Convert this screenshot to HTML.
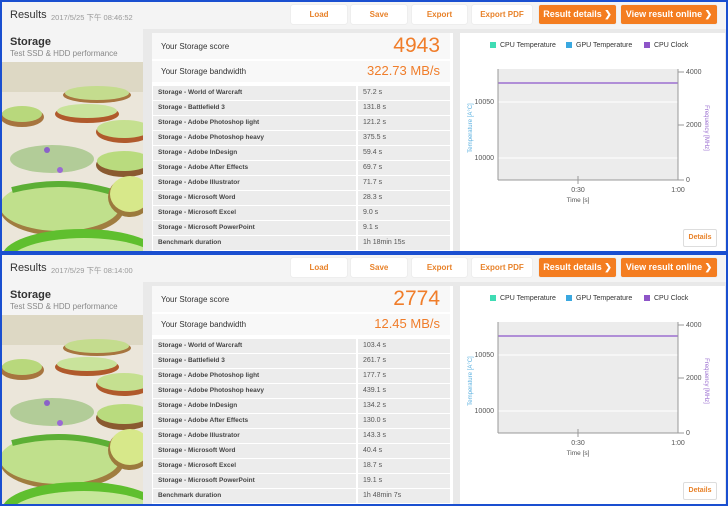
<!DOCTYPE html><html><head><style>
*{margin:0;padding:0;box-sizing:border-box}
body{width:728px;height:506px;background:#1a4fd0;font-family:"Liberation Sans","Noto Sans CJK TC",sans-serif;position:relative;overflow:hidden}
.p{position:absolute;left:2px;width:724px;height:249px;background:#e9e9e9;overflow:hidden}
.hd{position:absolute;left:0;top:0;width:724px;height:27px;background:#f4f4f4}
.hd .t{position:absolute;left:8px;top:7px;font-size:11px;color:#333}
.hd .d{position:absolute;left:49px;top:10px;font-size:7.5px;color:#999}
.b{position:absolute;top:3px;height:19px;background:#fff;color:#e8822a;font-size:8px;font-weight:bold;text-align:center;line-height:19px;border-radius:2px;box-shadow:0 0 1px #ccc}
.o{background:#f47d20;color:#fff;font-size:9px}
.lc{position:absolute;left:0;top:27px;width:141px;height:223px;background:#f4f4f4}
.lc .s{position:absolute;left:8px;top:7px;font-size:11px;font-weight:bold;color:#333}
.lc .ss{position:absolute;left:8px;top:20px;font-size:8px;color:#888}
.mc{position:absolute;left:150px;top:31px;width:301px;height:219px;background:#fff}
.sc{position:absolute;left:0;top:0;width:298px;height:26px;background:#f8f8f8}
.bw{position:absolute;left:0;top:28px;width:298px;height:21px;background:#f8f8f8}
.lab{position:absolute;left:9px;font-size:8px;color:#333}
.val{position:absolute;right:10px;color:#f07d2a}
.row{position:absolute;left:1px;width:297px;height:14px}
.row .a{position:absolute;left:0;top:0;width:203px;height:14px;background:#ececec;font-size:6.5px;font-weight:bold;color:#444;padding-left:5px;line-height:14px}
.row .c{position:absolute;left:205px;top:0;width:92px;height:14px;background:#ececec;font-size:7px;color:#555;padding-left:5px;line-height:14px}
.rc{position:absolute;left:458px;top:31px;width:265px;height:219px;background:#fff}
.lg{position:absolute;top:9px;font-size:7px;color:#333}
.lg i{display:inline-block;width:6px;height:6px;margin-right:4px;vertical-align:-1px}
.det{position:absolute;left:223px;top:196px;width:34px;height:18px;border:1px solid #ddd;border-radius:2px;font-size:7px;font-weight:bold;color:#e8822a;text-align:center;line-height:16px}
</style></head><body>

<div class="p" style="top:2px">
<div class="hd"><div class="t">Results</div><div class="d">2017/5/25 下午 08:46:52</div>
<div class="b" style="left:289px;width:56px">Load</div><div class="b" style="left:349px;width:56px">Save</div><div class="b" style="left:410px;width:55px">Export</div><div class="b" style="left:470px;width:60px">Export PDF</div>
<div class="b o" style="left:537px;width:77px">Result details ❯</div><div class="b o" style="left:619px;width:96px">View result online ❯</div></div>
<div class="lc"><div class="s">Storage</div><div class="ss">Test SSD &amp; HDD performance</div>
<svg style="position:absolute;left:0;top:33px" width="141" height="190"><rect width="141" height="190" fill="#ebe6da"/><rect y="0" width="141" height="30" fill="#ddd8c4"/>
<ellipse cx="95" cy="33" rx="34" ry="8" fill="#a7753f"/><ellipse cx="95" cy="31" rx="32" ry="7" fill="#c4dc8e"/>
<ellipse cx="20" cy="55" rx="22" ry="10" fill="#a7753f"/><ellipse cx="20" cy="52" rx="20" ry="8" fill="#b8d87c"/>
<ellipse cx="85" cy="52" rx="32" ry="9" fill="#b05a2c"/><ellipse cx="85" cy="49" rx="30" ry="7" fill="#c9e39b"/>
<ellipse cx="122" cy="70" rx="28" ry="11" fill="#b05a2c"/><ellipse cx="122" cy="67" rx="27" ry="9" fill="#c5e090"/>
<ellipse cx="50" cy="97" rx="42" ry="14" fill="#8cba6c" opacity=".6"/>
<ellipse cx="122" cy="103" rx="28" ry="12" fill="#8a5a30"/><ellipse cx="122" cy="99" rx="27" ry="10" fill="#b9db7e"/>
<ellipse cx="60" cy="147" rx="62" ry="27" fill="#a07d40"/><ellipse cx="58" cy="144" rx="60" ry="25" fill="#c0e08c"/><path d="M10 128 Q60 115 110 130" stroke="#5caf35" stroke-width="6" fill="none"/>
<ellipse cx="128" cy="135" rx="22" ry="20" fill="#9c7a3d"/><ellipse cx="128" cy="132" rx="20" ry="18" fill="#d7e88a"/>
<ellipse cx="80" cy="195" rx="80" ry="28" fill="#5fbf2e"/><ellipse cx="82" cy="200" rx="75" ry="24" fill="#c6e79a"/>
<circle cx="45" cy="88" r="3" fill="#8a62c8"/><circle cx="58" cy="108" r="3" fill="#9a6ad4"/></svg></div>
<div class="mc">
<div class="sc"><div class="lab" style="top:9px">Your Storage score</div><div class="val" style="top:1px;font-size:21px">4943</div></div>
<div class="bw"><div class="lab" style="top:6px">Your Storage bandwidth</div><div class="val" style="top:2px;font-size:13px">322.73 MB/s</div></div>
<div class="row" style="top:53px"><div class="a">Storage - World of Warcraft</div><div class="c">57.2 s</div></div>
<div class="row" style="top:68px"><div class="a">Storage - Battlefield 3</div><div class="c">131.8 s</div></div>
<div class="row" style="top:83px"><div class="a">Storage - Adobe Photoshop light</div><div class="c">121.2 s</div></div>
<div class="row" style="top:98px"><div class="a">Storage - Adobe Photoshop heavy</div><div class="c">375.5 s</div></div>
<div class="row" style="top:113px"><div class="a">Storage - Adobe InDesign</div><div class="c">59.4 s</div></div>
<div class="row" style="top:128px"><div class="a">Storage - Adobe After Effects</div><div class="c">69.7 s</div></div>
<div class="row" style="top:143px"><div class="a">Storage - Adobe Illustrator</div><div class="c">71.7 s</div></div>
<div class="row" style="top:158px"><div class="a">Storage - Microsoft Word</div><div class="c">28.3 s</div></div>
<div class="row" style="top:173px"><div class="a">Storage - Microsoft Excel</div><div class="c">9.0 s</div></div>
<div class="row" style="top:188px"><div class="a">Storage - Microsoft PowerPoint</div><div class="c">9.1 s</div></div>
<div class="row" style="top:203px"><div class="a">Benchmark duration</div><div class="c">1h 18min 15s</div></div>
</div>
<div class="rc">
<div class="lg" style="left:30px"><i style="background:#3fdcb4"></i>CPU Temperature</div><div class="lg" style="left:106px"><i style="background:#3aa8e0"></i>GPU Temperature</div><div class="lg" style="left:184px"><i style="background:#8e55c8"></i>CPU Clock</div>
<svg style="position:absolute;left:0;top:25px" width="265" height="160" font-family="Liberation Sans" font-size="7">
<rect x="38" y="11" width="180" height="111" fill="#ececec"/>
<g stroke="#fff"><line x1="38" y1="44" x2="218" y2="44"/><line x1="38" y1="100" x2="218" y2="100"/></g>
<line x1="38" y1="25" x2="218" y2="25" stroke="#9b6fd0" stroke-width="1.5"/>
<g stroke="#999"><line x1="38" y1="122" x2="218" y2="122"/><line x1="218" y1="11" x2="218" y2="122"/><line x1="38" y1="11" x2="38" y2="122"/><line x1="118" y1="118" x2="118" y2="126"/><line x1="218" y1="14" x2="224" y2="14"/><line x1="218" y1="67" x2="224" y2="67"/><line x1="218" y1="122" x2="224" y2="122"/></g>
<text x="34" y="46" text-anchor="end" fill="#555">10050</text><text x="34" y="102" text-anchor="end" fill="#555">10000</text>
<text x="226" y="16" fill="#555">4000</text><text x="226" y="69" fill="#555">2000</text><text x="226" y="124" fill="#555">0</text>
<text x="118" y="134" text-anchor="middle" fill="#555">0:30</text><text x="218" y="134" text-anchor="middle" fill="#555">1:00</text>
<text x="118" y="144" text-anchor="middle" fill="#555" font-size="6.5">Time [s]</text>
<text transform="translate(12,70) rotate(-90)" text-anchor="middle" fill="#5ab0e0" font-size="6">Temperature [A°C]</text>
<text transform="translate(245,70) rotate(90)" text-anchor="middle" fill="#9b6fd0" font-size="6">Frequency [MHz]</text></svg>
<div class="det">Details</div></div>
</div>

<div class="p" style="top:255px">
<div class="hd"><div class="t">Results</div><div class="d">2017/5/29 下午 08:14:00</div>
<div class="b" style="left:289px;width:56px">Load</div><div class="b" style="left:349px;width:56px">Save</div><div class="b" style="left:410px;width:55px">Export</div><div class="b" style="left:470px;width:60px">Export PDF</div>
<div class="b o" style="left:537px;width:77px">Result details ❯</div><div class="b o" style="left:619px;width:96px">View result online ❯</div></div>
<div class="lc"><div class="s">Storage</div><div class="ss">Test SSD &amp; HDD performance</div>
<svg style="position:absolute;left:0;top:33px" width="141" height="190"><rect width="141" height="190" fill="#ebe6da"/><rect y="0" width="141" height="30" fill="#ddd8c4"/>
<ellipse cx="95" cy="33" rx="34" ry="8" fill="#a7753f"/><ellipse cx="95" cy="31" rx="32" ry="7" fill="#c4dc8e"/>
<ellipse cx="20" cy="55" rx="22" ry="10" fill="#a7753f"/><ellipse cx="20" cy="52" rx="20" ry="8" fill="#b8d87c"/>
<ellipse cx="85" cy="52" rx="32" ry="9" fill="#b05a2c"/><ellipse cx="85" cy="49" rx="30" ry="7" fill="#c9e39b"/>
<ellipse cx="122" cy="70" rx="28" ry="11" fill="#b05a2c"/><ellipse cx="122" cy="67" rx="27" ry="9" fill="#c5e090"/>
<ellipse cx="50" cy="97" rx="42" ry="14" fill="#8cba6c" opacity=".6"/>
<ellipse cx="122" cy="103" rx="28" ry="12" fill="#8a5a30"/><ellipse cx="122" cy="99" rx="27" ry="10" fill="#b9db7e"/>
<ellipse cx="60" cy="147" rx="62" ry="27" fill="#a07d40"/><ellipse cx="58" cy="144" rx="60" ry="25" fill="#c0e08c"/><path d="M10 128 Q60 115 110 130" stroke="#5caf35" stroke-width="6" fill="none"/>
<ellipse cx="128" cy="135" rx="22" ry="20" fill="#9c7a3d"/><ellipse cx="128" cy="132" rx="20" ry="18" fill="#d7e88a"/>
<ellipse cx="80" cy="195" rx="80" ry="28" fill="#5fbf2e"/><ellipse cx="82" cy="200" rx="75" ry="24" fill="#c6e79a"/>
<circle cx="45" cy="88" r="3" fill="#8a62c8"/><circle cx="58" cy="108" r="3" fill="#9a6ad4"/></svg></div>
<div class="mc">
<div class="sc"><div class="lab" style="top:9px">Your Storage score</div><div class="val" style="top:1px;font-size:21px">2774</div></div>
<div class="bw"><div class="lab" style="top:6px">Your Storage bandwidth</div><div class="val" style="top:2px;font-size:13px">12.45 MB/s</div></div>
<div class="row" style="top:53px"><div class="a">Storage - World of Warcraft</div><div class="c">103.4 s</div></div>
<div class="row" style="top:68px"><div class="a">Storage - Battlefield 3</div><div class="c">261.7 s</div></div>
<div class="row" style="top:83px"><div class="a">Storage - Adobe Photoshop light</div><div class="c">177.7 s</div></div>
<div class="row" style="top:98px"><div class="a">Storage - Adobe Photoshop heavy</div><div class="c">439.1 s</div></div>
<div class="row" style="top:113px"><div class="a">Storage - Adobe InDesign</div><div class="c">134.2 s</div></div>
<div class="row" style="top:128px"><div class="a">Storage - Adobe After Effects</div><div class="c">130.0 s</div></div>
<div class="row" style="top:143px"><div class="a">Storage - Adobe Illustrator</div><div class="c">143.3 s</div></div>
<div class="row" style="top:158px"><div class="a">Storage - Microsoft Word</div><div class="c">40.4 s</div></div>
<div class="row" style="top:173px"><div class="a">Storage - Microsoft Excel</div><div class="c">18.7 s</div></div>
<div class="row" style="top:188px"><div class="a">Storage - Microsoft PowerPoint</div><div class="c">19.1 s</div></div>
<div class="row" style="top:203px"><div class="a">Benchmark duration</div><div class="c">1h 48min 7s</div></div>
</div>
<div class="rc">
<div class="lg" style="left:30px"><i style="background:#3fdcb4"></i>CPU Temperature</div><div class="lg" style="left:106px"><i style="background:#3aa8e0"></i>GPU Temperature</div><div class="lg" style="left:184px"><i style="background:#8e55c8"></i>CPU Clock</div>
<svg style="position:absolute;left:0;top:25px" width="265" height="160" font-family="Liberation Sans" font-size="7">
<rect x="38" y="11" width="180" height="111" fill="#ececec"/>
<g stroke="#fff"><line x1="38" y1="44" x2="218" y2="44"/><line x1="38" y1="100" x2="218" y2="100"/></g>
<line x1="38" y1="25" x2="218" y2="25" stroke="#9b6fd0" stroke-width="1.5"/>
<g stroke="#999"><line x1="38" y1="122" x2="218" y2="122"/><line x1="218" y1="11" x2="218" y2="122"/><line x1="38" y1="11" x2="38" y2="122"/><line x1="118" y1="118" x2="118" y2="126"/><line x1="218" y1="14" x2="224" y2="14"/><line x1="218" y1="67" x2="224" y2="67"/><line x1="218" y1="122" x2="224" y2="122"/></g>
<text x="34" y="46" text-anchor="end" fill="#555">10050</text><text x="34" y="102" text-anchor="end" fill="#555">10000</text>
<text x="226" y="16" fill="#555">4000</text><text x="226" y="69" fill="#555">2000</text><text x="226" y="124" fill="#555">0</text>
<text x="118" y="134" text-anchor="middle" fill="#555">0:30</text><text x="218" y="134" text-anchor="middle" fill="#555">1:00</text>
<text x="118" y="144" text-anchor="middle" fill="#555" font-size="6.5">Time [s]</text>
<text transform="translate(12,70) rotate(-90)" text-anchor="middle" fill="#5ab0e0" font-size="6">Temperature [A°C]</text>
<text transform="translate(245,70) rotate(90)" text-anchor="middle" fill="#9b6fd0" font-size="6">Frequency [MHz]</text></svg>
<div class="det">Details</div></div>
</div>
</body></html>
